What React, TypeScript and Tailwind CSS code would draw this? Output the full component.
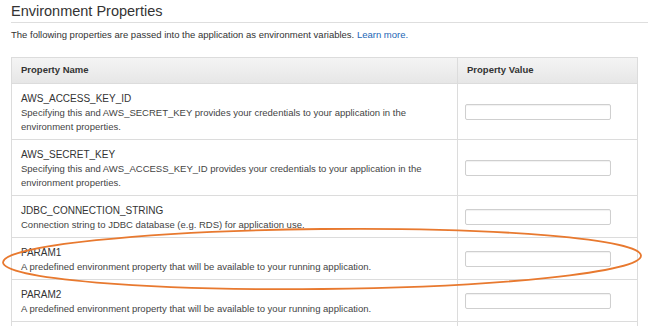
import * as React from "react";

const ROWS = [
    {
        name: "AWS_ACCESS_KEY_ID",
        desc: "Specifying this and AWS_SECRET_KEY provides your credentials to your application in the environment properties.",
    },
    {
        name: "AWS_SECRET_KEY",
        desc: "Specifying this and AWS_ACCESS_KEY_ID provides your credentials to your application in the environment properties.",
    },
    {
        name: "JDBC_CONNECTION_STRING",
        desc: "Connection string to JDBC database (e.g. RDS) for application use.",
    },
    {
        name: "PARAM1",
        desc: "A predefined environment property that will be available to your running application.",
    },
    {
        name: "PARAM2",
        desc: "A predefined environment property that will be available to your running application.",
    },
];

export default function App() {
    return (
        <div className="relative w-[648px] h-[326px] overflow-hidden bg-white font-['Liberation_Sans',Arial,sans-serif] text-[#333]">
            <div className="pl-[11px]">
                <h2 className="pt-[4px] pb-[3px] text-[14.5px] leading-[15px] border-b border-[#dedede]">
                    Environment Properties
                </h2>
                <p className="mt-[5px] text-[9.5px] leading-[14px]">
                    The following properties are passed into the application as environment variables.{" "}
                    <a className="text-[#2266b5]">Learn more.</a>
                </p>

                <table className="mt-[15px] w-[627px] border-collapse border border-[#dcdcdc] text-[9.5px]">
                    <thead>
                        <tr className="h-[26px] bg-gradient-to-b from-[#f4f4f4] to-[#e6e6e6]">
                            <th className="w-[446px] px-[9px] text-left font-bold border border-[#dcdcdc]">Property Name</th>
                            <th className="px-[9px] text-left font-bold border border-[#dcdcdc]">Property Value</th>
                        </tr>
                    </thead>
                    <tbody>
                        {ROWS.map((r) => (
                            <tr key={r.name}>
                                <td className="px-[9px] pt-[8px] pb-[5px] align-top leading-[14px] border border-[#dcdcdc]">
                                    <div className="text-[10px]">{r.name}</div>
                                    <div className="text-[#444]">{r.desc}</div>
                                </td>
                                <td className="pl-[7px] align-middle border border-[#dcdcdc]">
                                    <input
                                        type="text"
                                        className="block w-[146px] h-[16px] rounded-[2px] border border-[#cfcfcf] bg-white shadow-[inset_0_1px_1px_rgba(0,0,0,0.06)] outline-none"
                                    />
                                </td>
                            </tr>
                        ))}
                        {/* next row, scrolled below the fold */}
                        <tr className="h-[42px]">
                            <td className="border border-[#dcdcdc]" />
                            <td className="border border-[#dcdcdc]" />
                        </tr>
                    </tbody>
                </table>
            </div>

            {/* hand drawn highlight round PARAM1 */}
            <svg className="pointer-events-none absolute inset-0" width="648" height="326">
                <ellipse
                    cx="322"
                    cy="259"
                    rx="319"
                    ry="30"
                    transform="rotate(-0.6 322 259)"
                    fill="none"
                    stroke="#e8792f"
                    strokeWidth="1.8"
                />
            </svg>
        </div>
    );
}
